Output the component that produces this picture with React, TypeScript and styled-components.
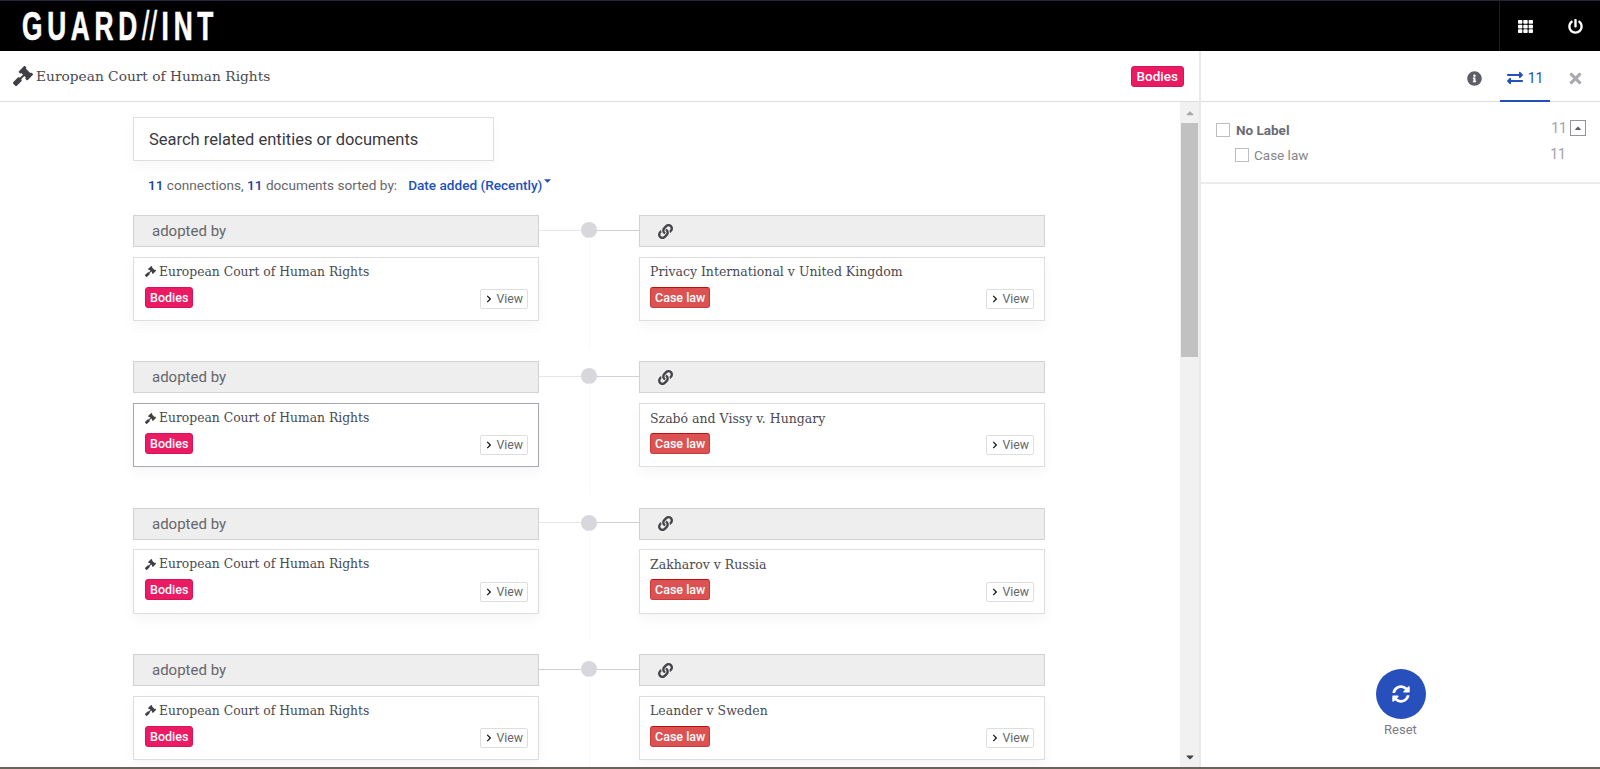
import React from "react";
import styled, { createGlobalStyle } from "styled-components";
import {
  FaCaretDown,
  FaCaretUp,
  FaChevronRight,
  FaExchangeAlt,
  FaGavel,
  FaInfoCircle,
  FaLink,
  FaPowerOff,
  FaSyncAlt,
  FaTh,
  FaTimes,
} from "react-icons/fa";

const Global = createGlobalStyle`
  html, body { margin: 0; padding: 0; background: #fff; }
  * { box-sizing: border-box; }
  body { font-family: Roboto, "Liberation Sans", sans-serif; overflow: hidden; }
`;

const Page = styled.div`
  display: flex;
  flex-direction: column;
  height: 769px;
  overflow: hidden;
  border-bottom: 2px solid #6b6259;
`;

const TopBar = styled.header`
  display: flex;
  justify-content: space-between;
  height: 51px;
  flex-shrink: 0;
  background: #000;
  border-top: 1px solid #23263a;
  padding-left: 22px;
  overflow: hidden;
`;

const Logo = styled.div`
  font-family: "Liberation Sans", sans-serif;
  font-weight: 700;
  font-size: 41px;
  line-height: 50px;
  letter-spacing: 7.4px;
  color: #fff;
  white-space: nowrap;
  -webkit-text-stroke: 0.7px #fff;
  transform: scaleX(0.64);
  transform-origin: left center;
`;

const LogoSlashes = styled.span`
  font-weight: 400;
  letter-spacing: 1px;
  margin-right: 6px;
`;

const TopActions = styled.div`
  display: flex;
  border-left: 1px solid #1d1d1d;
`;

const TopAction = styled.div`
  display: flex;
  align-items: center;
  justify-content: center;
  width: 50px;
  color: #fff;
  font-size: 15px;
`;

const Main = styled.div`
  display: flex;
  flex: 1;
  min-height: 0;
`;

const LeftPanel = styled.section`
  display: flex;
  flex-direction: column;
  width: 1199px;
  min-width: 0;
`;

const EntityHeader = styled.div`
  display: flex;
  align-items: center;
  justify-content: space-between;
  height: 51px;
  flex-shrink: 0;
  padding: 0 15px 0 13px;
  border-bottom: 1px solid #dcdcdc;
`;

const EntityName = styled.div`
  display: flex;
  align-items: center;
  gap: 3px;
`;

const Gavel = styled(FaGavel)<{ $size: number }>`
  font-size: ${(p) => p.$size}px;
  color: #3f3f45;
  flex-shrink: 0;
`;

const SerifTitle = styled.span<{ $size: number }>`
  font-family: "DejaVu Serif", serif;
  font-size: ${(p) => p.$size}px;
  color: #4a4a50;
  white-space: nowrap;
`;

const Tag = styled.span<{ $kind: "bodies" | "case"; $size?: number }>`
  display: inline-block;
  font-size: ${(p) => p.$size ?? 12.5}px;
  font-weight: 500;
  line-height: 19px;
  padding: 0 ${(p) => (p.$size ? 5 : 4)}px;
  color: #fff;
  border-radius: 3px;
  background: ${(p) => (p.$kind === "bodies" ? "#ea1a63" : "#dc5252")};
  border: 1px solid ${(p) => (p.$kind === "bodies" ? "#d5145a" : "#c93c3c")};
  border-top-color: ${(p) => (p.$kind === "bodies" ? "#d5145a" : "#c00f0f")};
`;

const BodyRow = styled.div`
  display: flex;
  flex: 1;
  min-height: 0;
`;

const Content = styled.div`
  flex: 1;
  min-width: 0;
  overflow: hidden;
  padding: 15px 0 0 133px;
`;

const SearchBox = styled.div`
  width: 361px;
  height: 44px;
  padding: 0 15px;
  display: flex;
  align-items: center;
  border: 1px solid #dedede;
  font-size: 16.5px;
  color: #3a3a42;
  box-shadow: 0 6px 12px rgba(0, 0, 0, 0.03);
`;

const Summary = styled.div`
  display: flex;
  align-items: center;
  margin: 14px 0 0 15px;
  height: 20px;
  font-size: 13.6px;
  color: #66666c;
`;

const Count = styled.b`
  font-weight: 500;
  color: #1f3f9e;
`;

const SortBy = styled.span`
  display: inline-flex;
  margin-left: 11px;
  color: #2250bd;
  font-weight: 500;

  svg {
    font-size: 11px;
    margin: -2px 0 0 0;
  }
`;

const Connections = styled.div`
  display: flex;
  flex-direction: column;
  gap: 40.3px;
  margin-top: 20px;
`;

const ConnectionRow = styled.div`
  display: grid;
  grid-template-columns: 406px 100px 406px;
  grid-template-rows: 32px 64.4px;
  row-gap: 9.7px;
`;

const LabelBar = styled.div`
  display: flex;
  align-items: center;
  padding-left: 18px;
  background: #eeeeee;
  border: 1px solid #d2d2d2;
  font-size: 15px;
  color: #66666c;
`;

const LinkIcon = styled(FaLink)`
  font-size: 15px;
  color: #44444a;
`;

const Connector = styled.div`
  position: relative;
  display: flex;
  align-items: center;
  margin-top: -2px;
`;

const ConnectorLine = styled.span<{ $dark?: boolean }>`
  flex: 1;
  height: 1px;
  background: ${(p) => (p.$dark ? "#cfcfd4" : "#e6e6e6")};
`;

const ConnectorDot = styled.span`
  width: 16px;
  height: 16px;
  border-radius: 50%;
  background: #d7d7dd;
  flex-shrink: 0;
`;

const ConnectorTail = styled.span`
  position: absolute;
  left: 50%;
  top: 24px;
  width: 1px;
  height: 112px;
  background: #f9f9f9;
`;

const Card = styled.article<{ $active?: boolean; $col: number }>`
  position: relative;
  grid-row: 2;
  grid-column: ${(p) => p.$col};
  padding: 5px 11px 0 ${(p) => (p.$col === 1 ? 11 : 10)}px;
  background: #fff;
  border: 1px solid ${(p) => (p.$active ? "#a8a8b0" : "#dedede")};
  box-shadow: 0 6px 12px rgba(0, 0, 0, 0.04);
`;

const CardTitle = styled.div`
  display: flex;
  align-items: center;
  gap: 3px;
  height: 18px;
`;

const TagRow = styled.div`
  margin-top: 6px;
  line-height: 0;
`;

const ViewButton = styled.span`
  position: absolute;
  right: 10px;
  bottom: 11px;
  display: flex;
  align-items: center;
  gap: 3px;
  height: 20px;
  padding: 0 4px;
  border: 1px solid #dedede;
  border-radius: 2px;
  font-size: 12.3px;
  color: #66666c;

  svg {
    font-size: 8px;
    color: #111;
  }
`;

const Scrollbar = styled.div`
  display: flex;
  flex-direction: column;
  width: 19px;
  flex-shrink: 0;
  background: #f1f1f1;
  font-size: 12px;
  align-items: center;
`;

const ScrollArrow = styled.div<{ $dark?: boolean }>`
  height: 21px;
  display: flex;
  align-items: center;
  justify-content: center;
  color: ${(p) => (p.$dark ? "#444" : "#a8a8a8")};
`;

const ScrollThumb = styled.div`
  width: 17px;
  height: 234px;
  background: #c1c1c1;
`;

const ScrollRest = styled.div`
  flex: 1;
`;

const SidePanel = styled.aside`
  display: flex;
  flex-direction: column;
  flex: 1;
  border-left: 2px solid #e9e9e9;
`;

const SideTabs = styled.div`
  display: flex;
  justify-content: flex-end;
  align-items: stretch;
  height: 51px;
  flex-shrink: 0;
  border-bottom: 1px solid #dcdcdc;
`;

const SideTab = styled.div<{ $active?: boolean; $color?: string }>`
  display: flex;
  align-items: center;
  justify-content: center;
  gap: 5px;
  width: ${(p) => (p.$active ? "50px" : "auto")};
  margin: 0 ${(p) => (p.$active ? "17px" : "0")} -1px ${(p) => (p.$active ? "18px" : "0")};
  padding-top: 4px;
  font-size: 14px;
  color: ${(p) => p.$color};
  border-bottom: ${(p) => (p.$active ? "2px solid #2250bd" : "none")};

  svg {
    font-size: ${(p) => (p.$active ? "16px" : "inherit")};
  }
`;

const CloseTab = styled(SideTab)`
  font-size: 17px;
  margin-right: 16px;
`;

const InfoTab = styled(SideTab)`
  font-size: 15px;
`;

const Filters = styled.div`
  padding: 15px 15px 0 15px;
  height: 82px;
  border-bottom: 2px solid #ececec;
`;

const FilterRow = styled.div<{ $child?: boolean }>`
  display: flex;
  align-items: center;
  height: ${(p) => (p.$child ? "26px" : "25px")};
  padding-left: ${(p) => (p.$child ? "19px" : "0")};
  font-size: 13.5px;
  font-weight: ${(p) => (p.$child ? 400 : 700)};
  color: ${(p) => (p.$child ? "#85858d" : "#6a6a75")};
`;

const Checkbox = styled.span<{ $gap: number }>`
  width: 14px;
  height: 14px;
  border: 1px solid #bdbdc4;
  margin-right: ${(p) => p.$gap}px;
  flex-shrink: 0;
`;

const FilterCount = styled.span<{ $pad?: boolean }>`
  margin-left: auto;
  margin-right: ${(p) => (p.$pad ? "0" : "19px")};
  font-size: 14px;
  font-weight: 400;
  color: #a0a0a6;
  margin-top: -3px;
`;

const Expand = styled.span`
  display: flex;
  align-items: center;
  justify-content: center;
  width: 16px;
  height: 16px;
  margin: -3px -1px 0 3px;
  border: 1px solid #94949b;
  font-size: 10px;
  color: #5e5e68;
`;

const SideSpacer = styled.div`
  flex: 1;
`;

const ResetArea = styled.div`
  display: flex;
  flex-direction: column;
  align-items: center;
  padding-bottom: 30px;
  font-size: 13px;
  color: #7b7b82;
`;

const ResetButton = styled.div`
  display: flex;
  align-items: center;
  justify-content: center;
  width: 50px;
  height: 50px;
  margin-bottom: 3px;
  border-radius: 50%;
  background: #2850bd;
  color: #fff;
  font-size: 18px;
`;

const rows = [
  { name: "Privacy International v United Kingdom" },
  { name: "Szabó and Vissy v. Hungary", active: true },
  { name: "Zakharov v Russia" },
  { name: "Leander v Sweden", dark: true },
];

export default function App() {
  return (
    <Page>
      <Global />
      <TopBar>
        <Logo>
          GUARD<LogoSlashes>//</LogoSlashes>INT
        </Logo>
        <TopActions>
          <TopAction>
            <FaTh />
          </TopAction>
          <TopAction>
            <FaPowerOff />
          </TopAction>
        </TopActions>
      </TopBar>
      <Main>
        <LeftPanel>
          <EntityHeader>
            <EntityName>
              <Gavel $size={20} />
              <SerifTitle $size={13.75}>European Court of Human Rights</SerifTitle>
            </EntityName>
            <Tag $kind="bodies" $size={13.5}>
              Bodies
            </Tag>
          </EntityHeader>
          <BodyRow>
            <Content>
              <SearchBox>Search related entities or documents</SearchBox>
              <Summary>
                <span>
                  <Count>11</Count> connections, <Count>11</Count> documents sorted by:
                </span>
                <SortBy>
                  Date added (Recently)
                  <FaCaretDown />
                </SortBy>
              </Summary>
              <Connections>
                {rows.map((row) => (
                  <ConnectionRow key={row.name}>
                    <LabelBar>adopted by</LabelBar>
                    <Connector>
                      <ConnectorLine $dark={row.dark} />
                      <ConnectorDot />
                      <ConnectorLine $dark />
                      <ConnectorTail />
                    </Connector>
                    <LabelBar>
                      <LinkIcon />
                    </LabelBar>
                    <Card $col={1} $active={row.active}>
                      <CardTitle>
                        <Gavel $size={11} />
                        <SerifTitle $size={12.35}>European Court of Human Rights</SerifTitle>
                      </CardTitle>
                      <TagRow>
                        <Tag $kind="bodies">Bodies</Tag>
                      </TagRow>
                      <ViewButton>
                        <FaChevronRight />
                        View
                      </ViewButton>
                    </Card>
                    <Card $col={3}>
                      <CardTitle>
                        <SerifTitle $size={12.5}>{row.name}</SerifTitle>
                      </CardTitle>
                      <TagRow>
                        <Tag $kind="case">Case law</Tag>
                      </TagRow>
                      <ViewButton>
                        <FaChevronRight />
                        View
                      </ViewButton>
                    </Card>
                  </ConnectionRow>
                ))}
              </Connections>
            </Content>
            <Scrollbar>
              <ScrollArrow>
                <FaCaretUp />
              </ScrollArrow>
              <ScrollThumb />
              <ScrollRest />
              <ScrollArrow $dark>
                <FaCaretDown />
              </ScrollArrow>
            </Scrollbar>
          </BodyRow>
        </LeftPanel>
        <SidePanel>
          <SideTabs>
            <InfoTab $color="#5e5e68">
              <FaInfoCircle />
            </InfoTab>
            <SideTab $active $color="#2250bd">
              <FaExchangeAlt />
              11
            </SideTab>
            <CloseTab $color="#a9a9b0">
              <FaTimes />
            </CloseTab>
          </SideTabs>
          <Filters>
            <FilterRow>
              <Checkbox $gap={6} />
              No Label
              <FilterCount $pad>11</FilterCount>
              <Expand>
                <FaCaretUp />
              </Expand>
            </FilterRow>
            <FilterRow $child>
              <Checkbox $gap={5} />
              Case law
              <FilterCount>11</FilterCount>
            </FilterRow>
          </Filters>
          <SideSpacer />
          <ResetArea>
            <ResetButton>
              <FaSyncAlt />
            </ResetButton>
            Reset
          </ResetArea>
        </SidePanel>
      </Main>
    </Page>
  );
}
